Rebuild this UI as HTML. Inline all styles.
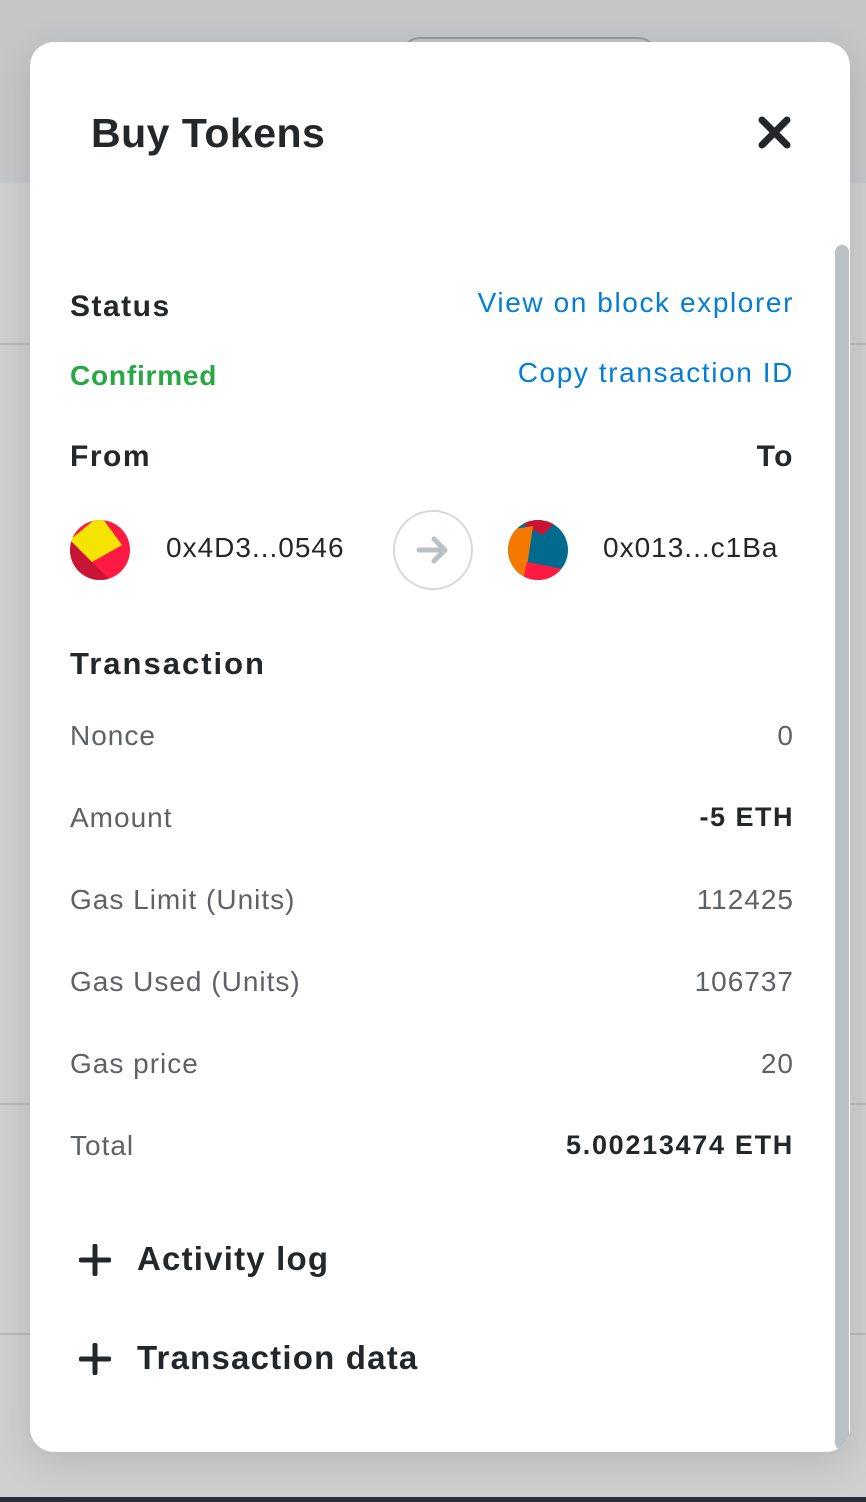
<!DOCTYPE html>
<html><head><meta charset="utf-8"><style>
*{margin:0;padding:0;box-sizing:border-box}
body{width:866px;height:1502px;overflow:hidden;background:#cfcfcf;font-family:"Liberation Sans",sans-serif;position:relative;color:#24272a}
.top{position:absolute;left:0;top:0;width:866px;height:183px;background:#c5c6c8}
.pill{position:absolute;left:400px;top:37px;width:258px;height:40px;border:2px solid #9a9ca0;border-radius:20px}
.ln{position:absolute;left:0;width:866px;height:2px;background:#b9babd}
.bot{position:absolute;left:0;top:1497px;width:866px;height:5px;background:#2a2d3a}
.modal{position:absolute;left:30px;top:42px;width:820px;height:1410px;background:#fff;border-radius:24px;box-shadow:0 10px 40px rgba(0,0,0,.12);overflow:hidden}
.sb{position:absolute;left:805px;top:203px;width:14px;height:1205px;background:#bbc0c5;border-radius:7px}
.a{position:absolute;white-space:nowrap}
.h{font-weight:bold;font-size:30px;letter-spacing:1.5px}
.v{font-size:28px;color:#5e6166;letter-spacing:1px}
.r{right:56px;text-align:right}
.link{color:#037dd6;font-size:28px;letter-spacing:1.6px}
</style></head><body>
<div class="top"><div class="pill"></div></div>
<div class="ln" style="top:343px"></div>
<div class="ln" style="top:1103px"></div>
<div class="ln" style="top:1333px"></div>
<div class="bot"></div>
<div class="modal">
<div class="a" style="left:61px;top:68px;font-size:41px;font-weight:bold;letter-spacing:0.5px">Buy Tokens</div>
<svg class="a" style="left:728px;top:74px" width="33" height="33" viewBox="0 0 33 33"><path d="M4 4L29 29M29 4L4 29" stroke="#24272a" stroke-width="7" stroke-linecap="round"/></svg>
<div class="sb"></div>
<div class="a h" style="left:40px;top:248px">Status</div>
<div class="a link r" style="top:245px">View on block explorer</div>
<div class="a" style="left:40px;top:318px;font-size:28px;font-weight:bold;color:#28a745;letter-spacing:0.8px">Confirmed</div>
<div class="a link r" style="top:315px">Copy transaction ID</div>
<div class="a h" style="left:40px;top:398px">From</div>
<div class="a h r" style="top:398px">To</div>
<svg class="a" style="left:40px;top:478px" width="60" height="60" viewBox="0 0 60 60"><defs><clipPath id="c1"><circle cx="30" cy="30" r="30"/></clipPath></defs><g clip-path="url(#c1)"><rect width="60" height="60" fill="#ff1a44"/><polygon points="0,20 0,60 40,60" fill="#c81536"/><polygon points="0,20 30,-5 52,25 22,42" fill="#f5e400"/></g></svg>
<div class="a v" style="left:136px;top:490px;color:#24272a">0x4D3...0546</div>
<div class="a" style="left:363px;top:468px;width:80px;height:80px;border:2px solid #d6d9dc;border-radius:50%"></div>
<svg class="a" style="left:385px;top:490px" width="36" height="36" viewBox="0 0 36 36"><path d="M4 18H30M19 7L30 18L19 29" stroke="#bbc0c5" stroke-width="5" fill="none" stroke-linecap="round" stroke-linejoin="round"/></svg>
<svg class="a" style="left:478px;top:478px" width="60" height="60" viewBox="0 0 60 60"><defs><clipPath id="c2"><circle cx="30" cy="30" r="30"/></clipPath></defs><g clip-path="url(#c2)"><rect width="60" height="60" fill="#006b8f"/><polygon points="10,0 50,0 35,15 25,10" fill="#c81536"/><polygon points="0,10 25,6 17,60 0,60" fill="#f57800"/><polygon points="19,42 60,50 60,60 15,60" fill="#ff1a44"/></g></svg>
<div class="a v" style="left:573px;top:490px;color:#24272a">0x013...c1Ba</div>
<div class="a h" style="left:40px;top:604px;font-size:31px;letter-spacing:2px">Transaction</div>
<div class="a v" style="left:40px;top:678px">Nonce</div><div class="a v r" style="top:678px">0</div>
<div class="a v" style="left:40px;top:760px">Amount</div><div class="a r" style="top:760px;font-size:27px;font-weight:bold;letter-spacing:1.5px">-5 ETH</div>
<div class="a v" style="left:40px;top:842px">Gas Limit (Units)</div><div class="a v r" style="top:842px">112425</div>
<div class="a v" style="left:40px;top:924px">Gas Used (Units)</div><div class="a v r" style="top:924px">106737</div>
<div class="a v" style="left:40px;top:1006px">Gas price</div><div class="a v r" style="top:1006px">20</div>
<div class="a v" style="left:40px;top:1088px">Total</div><div class="a r" style="top:1088px;font-size:27px;font-weight:bold;letter-spacing:1.7px">5.00213474 ETH</div>
<svg class="a" style="left:49px;top:1202px" width="32" height="32" viewBox="0 0 32 32"><path d="M16 2V30M2 16H30" stroke="#24272a" stroke-width="5" stroke-linecap="round"/></svg>
<div class="a h" style="left:107px;top:1198px;font-size:33px;letter-spacing:1.2px">Activity log</div>
<svg class="a" style="left:49px;top:1301px" width="32" height="32" viewBox="0 0 32 32"><path d="M16 2V30M2 16H30" stroke="#24272a" stroke-width="5" stroke-linecap="round"/></svg>
<div class="a h" style="left:107px;top:1297px;font-size:33px;letter-spacing:1.2px">Transaction data</div>
</div>
</body></html>
